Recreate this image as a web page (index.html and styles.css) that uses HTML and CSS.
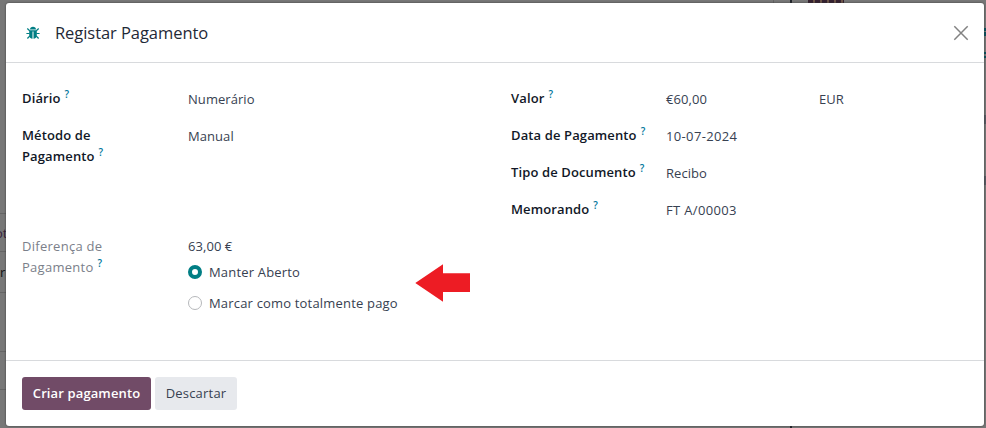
FILE: index.html
```html
<!DOCTYPE html>
<html lang="pt">
<head>
<meta charset="utf-8">
<title>Registar Pagamento</title>
<link rel="stylesheet" href="styles.css">
</head>
<body>
<div class="backdrop" aria-hidden="true">
  <i class="rule r1"></i><i class="rule r2"></i><i class="rule r3"></i><i class="rule r4"></i><i class="rule r5"></i>
  <span class="peek p1">ot</span><span class="peek p2">r</span>
  <i class="divider d1"></i><i class="divider d2"></i><i class="divider d3"></i><i class="avatar"></i>
  <i class="mark m1"></i><i class="mark m2"></i><i class="mark m3"></i><i class="mark m4"></i><i class="mark m5"></i><i class="mark m6"></i>
</div>
<main class="modal" role="dialog">
  <header class="modal-header">
    <svg class="bug" width="14" height="14" viewBox="0 0 14 14">
      <path d="M4 3.600C4 1.700 5.300.8 7 .8s3 .9 3 2.800z" fill="#017e84"/>
      <path d="M3.200 4.200h7.600v5c0 2-1.400 3.400-3.300 3.600V5.400h-1v7.400c-1.900-.2-3.300-1.600-3.300-3.600z" fill="#017e84"/>
      <path d="M1.300 2.500 3.700 4.800M12.700 2.500l-2.400 2.300M.4 7.500H3.600M13.600 7.500H10.400M1.400 12.500l2.500-2.700M12.600 12.500l-2.500-2.700" fill="none" stroke="#017e84" stroke-width="1.200"/>
    </svg>
    <h1 class="title">Registar Pagamento</h1>
    <svg class="close" width="16" height="16" viewBox="0 0 16 16"><path d="M1.300 1.300l13.400 13.400M14.700 1.300L1.300 14.700" stroke="#828282" stroke-width="1.500" fill="none"/></svg>
  </header>
  <section class="modal-body">
    <div class="group left">
      <div class="row"><div class="label">Diário<sup>?</sup></div><div class="value">Numerário</div></div>
      <div class="row method"><div class="label">Método de<br>Pagamento<sup>?</sup></div><div class="value">Manual</div></div>
      <div class="row difference">
        <div class="label muted">Diferença de<br>Pagamento<sup>?</sup></div>
        <div class="value">
          <div class="amount">63,00 €</div>
          <div class="option"><i class="radio checked"></i><span>Manter Aberto</span></div>
          <div class="option"><i class="radio"></i><span>Marcar como totalmente pago</span></div>
        </div>
      </div>
    </div>
    <div class="group right">
      <div class="row"><div class="label">Valor<sup>?</sup></div><div class="value money"><span>€60,00</span><span>EUR</span></div></div>
      <div class="row"><div class="label">Data de Pagamento<sup>?</sup></div><div class="value loose">10-07-2024</div></div>
      <div class="row"><div class="label">Tipo de Documento<sup>?</sup></div><div class="value">Recibo</div></div>
      <div class="row"><div class="label">Memorando<sup>?</sup></div><div class="value loose">FT A/00003</div></div>
    </div>
    <svg class="arrow" width="56" height="38" viewBox="0 0 56 38"><path d="M.3 19 28 .2V9.300H55V28H28v9.800z" fill="#ed1c24"/></svg>
  </section>
  <footer class="modal-footer">
    <button class="btn primary">Criar pagamento</button>
    <button class="btn secondary">Descartar</button>
  </footer>
</main>
</body>
</html>
```
FILE: styles.css
```css
* { box-sizing: border-box; }
body {
  margin: 0;
  width: 986px;
  height: 428px;
  overflow: hidden;
  padding: 3px 2px 2px 6px;
  background: #777;
  font: 14px/21px "Open Sans", "Noto Sans", sans-serif;
  color: #374151;
}
.backdrop i, .peek { position: absolute; }
.rule { left: 0; width: 6px; height: 1px; background: #646464; }
.r1 { top: 213px; } .r2 { top: 251px; } .r3 { top: 292px; } .r4 { top: 351px; } .r5 { top: 389px; }
.peek { left: -5px; color: #341e38; font-size: 13px; }
.p1 { top: 223px; } .p2 { top: 262px; left: 0; color: #111; }
.divider { width: 2px; height: 3px; top: 0; background: #20242b; }
.d1 { left: 790px; } .d2 { left: 790px; top: 426px; } .d3 { left: 773px; width: 1px; background: #646464; }
.avatar { left: 808px; top: 0; width: 36px; height: 3px; background: repeating-linear-gradient(90deg, #352130 0 5px, #6d5548 5px 7px); }
.mark { left: 984px; width: 2px; height: 2px; background: #07505d; }
.m1 { top: 28px; height: 3px; } .m2 { top: 32px; height: 4px; } .m3 { top: 52px; } .m4 { top: 56px; }
.m5, .m6 { height: 9px; background: #565961; }
.m5 { top: 115px; } .m6 { top: 176px; }
.modal {
  position: relative;
  display: flex;
  flex-direction: column;
  height: 423px;
  background: #fff;
  border-radius: 3px;
  box-shadow: 0 0 2px #333;
}
.modal-header {
  display: flex;
  align-items: center;
  height: 60px;
  padding: 0 15px 0 20px;
  border-bottom: 1px solid #d8dadd;
}
.bug { margin-top: 1px; }
.title { margin: 0 auto 0 15px; font-size: 16.500px; font-weight: 400; color: #1f2937; letter-spacing: -.06px; }
.modal-body { display: flex; height: 297px; padding-top: 22px; }
.group { width: 489px; padding-left: 16px; }
.row { display: flex; min-height: 37px; }
.label { width: 166px; padding-top: 3px; color: #111827; font-weight: 600; font-size: 13px; letter-spacing: .12px; white-space: nowrap; }
.muted { padding-top: 4px; color: #7b808a; font-weight: 500; letter-spacing: .28px; }
.right .label { width: 155px; }
.value { padding-top: 4px; font-size: 13px; letter-spacing: .06px; white-space: nowrap; }
.loose { letter-spacing: .35px; }
sup { margin-left: 4px; color: #01769c; font-size: 10px; font-weight: 600; line-height: 0; vertical-align: 5px; }
.method { height: 110px; }
.money { display: flex; }
.money span:first-child { width: 153px; }
.amount { margin-bottom: 4px; }
.option { display: flex; align-items: center; height: 21px; margin-bottom: 10px; letter-spacing: .18px; }
.radio { width: 14px; height: 14px; margin: 1px 7px 0 0; border: 1px solid #b6b8bb; border-radius: 50%; }
.option span { position: relative; top: 1px; }
.checked { border: 4px solid #017e84; }
.arrow { position: absolute; left: 409px; top: 261px; }
.modal-footer { display: flex; gap: 4px; padding: 16px; border-top: 1px solid #d8dadd; height: 66px; }
.btn { height: 33px; padding: 0; border: 0; border-radius: 3px; font: 600 13px/33px "Open Sans", sans-serif; letter-spacing: .12px; }
.primary { width: 129px; background: #714b67; color: #fff; }
.secondary { width: 82px; background: #e7e9ed; color: #374151; font-weight: 500; letter-spacing: .2px; }
```
